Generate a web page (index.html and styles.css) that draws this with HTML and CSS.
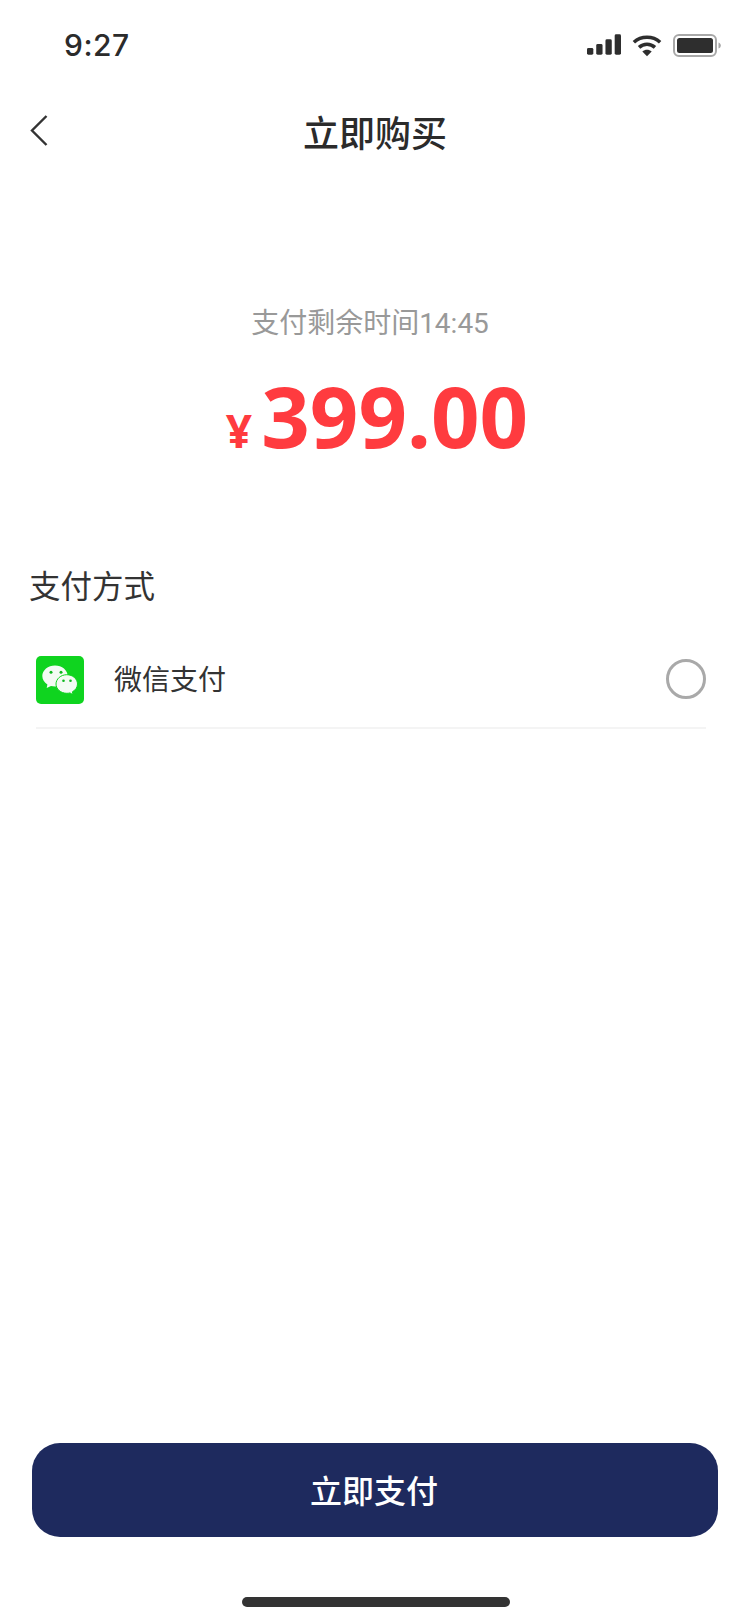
FILE: index.html
```html
<!DOCTYPE html>
<html lang="zh-CN">
<head>
<meta charset="utf-8">
<title>立即购买</title>
<link rel="stylesheet" href="styles.css">
</head>
<body>
<div class="page">
  <header class="status">
    <span class="time">9:27</span>
    <div class="status-icons">
      <svg class="ic-signal" width="34" height="22" viewBox="0 0 35 22"><g fill="#2e2e2e"><rect x="0" y="14" width="6.500" height="7" rx="1.500"/><rect x="9.500" y="10" width="6.500" height="11" rx="1.500"/><rect x="19" y="5" width="6.500" height="16" rx="1.500"/><rect x="28.500" y="0" width="6.500" height="21" rx="1.500"/></g></svg>
      <svg class="ic-wifi" width="30" height="23" viewBox="0 0 32 24"><g fill="none" stroke="#2e2e2e" stroke-width="3.800"><path d="M2 8.500C9.800 1.500 22.200 1.500 30 8.500"/><path d="M7.500 14C12.400 9.600 19.600 9.600 24.500 14"/></g><path d="M11 18.500C14 16 18 16 21 18.500L16 23.500Z" fill="#2e2e2e"/></svg>
      <svg class="ic-batt" width="48" height="23" viewBox="0 0 48 23"><rect x="1" y="1" width="42" height="21" rx="5" fill="none" stroke="#a8a8a8" stroke-width="2"/><rect x="4" y="4" width="36" height="15" rx="2.500" fill="#2e2e2e"/><path d="M45.500 8.500C47 9 47.800 10 47.800 11.500S47 14 45.500 14.500Z" fill="#a8a8a8"/></svg>
    </div>
  </header>

  <nav class="nav">
    <svg class="back" width="18" height="31" viewBox="0 0 18 31"><path d="M16.500 1L2 15.500 16.500 30" fill="none" stroke="#333" stroke-width="2.400"/></svg>
    <h1 class="title">立即购买</h1>
    <span class="nav-spacer"></span>
  </nav>

  <section class="summary">
    <p class="remain">支付剩余时间14:45</p>
    <p class="price"><span class="yen">¥</span><span class="amount">399.00</span></p>
  </section>

  <section class="methods">
    <h2 class="methods-title">支付方式</h2>
    <div class="method">
      <svg class="wechat" width="48" height="48" viewBox="0 0 48 48">
        <rect width="48" height="48" rx="5" fill="#0fd41f"/>
        <path d="M19 9.500C12 9.500 6.300 14.200 6.300 20c0 3.500 2 6.500 5.100 8.400L10.700 32l4.300-2.100c1.300.3 2.600.5 4 .5 7 0 12.700-4.600 12.700-10.400S26 9.500 19 9.500z" fill="#f4fbf4"/>
        <path d="M41.500 28c0-5-4.700-9.300-10.700-9.300S20 23 20 28s4.800 9.300 10.800 9.300c1.100 0 2.200-.1 3.200-.4l3 1.900-.6-3C39.500 34.100 41.500 31.300 41.500 28z" fill="#f4fbf4" stroke="#0fd41f" stroke-width="1"/>
        <circle cx="15" cy="16.300" r="1.500" fill="#0fb81f"/><circle cx="25" cy="16.300" r="1.500" fill="#0fb81f"/>
        <circle cx="27.500" cy="24.700" r="1.300" fill="#0fb81f"/><circle cx="34.500" cy="24.700" r="1.300" fill="#0fb81f"/>
      </svg>
      <span class="method-name">微信支付</span>
      <span class="radio"></span>
    </div>
  </section>

  <button class="pay" type="button">立即支付</button>
  <div class="home-wrap"><div class="home-bar"></div></div>
</div>
</body>
</html>
```

FILE: styles.css
```css
* { box-sizing: border-box; }
html, body { margin: 0; padding: 0; background: #fff; }
body { font-family: Roboto, "Noto Sans CJK SC", sans-serif; color: #333; }
.page { width: 750px; height: 1624px; display: flex; flex-direction: column; overflow: hidden; }
.status { height: 90px; display: flex; align-items: center; justify-content: space-between; padding: 0 29px 0 64px; }
.time { font-family: Inter, Roboto, sans-serif; font-size: 30px; font-weight: 500; color: #2b2b2b; letter-spacing: 0.5px; }
.status-icons { display: flex; align-items: center; gap: 11px; }
.nav { height: 90px; display: grid; grid-template-columns: 90px 1fr 90px; align-items: center; }
.back { margin: -10px 0 0 30px; }
.title { margin: 0; text-align: center; font-size: 36px; font-weight: 500; color: #2b2b2b; line-height: 1; }
.summary { padding-top: 124px; display: flex; flex-direction: column; align-items: center; }
.remain { margin: 0 10px 0 0; font-size: 28px; line-height: 40px; color: #999; }
.price { margin: 21px 0 0 4px; display: flex; align-items: baseline; gap: 9px; color: #ff3b3f; font-family: "Noto Sans", "Open Sans", sans-serif; font-weight: 700; line-height: 100px; }
.yen { font-size: 46px; }
.amount { font-size: 85px; }
.methods { padding: 86px 44px 0 36px; }
.methods-title { margin: 0 0 0 -7px; font-size: 31.5px; font-weight: 400; line-height: 44px; color: #333; }
.method { margin-top: 42px; height: 77px; display: flex; align-items: flex-start; border-bottom: 2px solid #f4f4f4; padding-top: 4px; }
.method-name { margin: 1px 0 0 30px; font-size: 28px; line-height: 48px; color: #333; }
.radio { margin-left: auto; width: 40px; height: 40px; border: 3px solid #a9a9a9; border-radius: 50%; margin-top: 3px; }
.pay { margin: auto 32px 0; height: 94px; padding: 0 2px 2px 0; border: 0; border-radius: 28px; background: #1e2a5e; color: #fff; font-family: "Noto Sans CJK SC", sans-serif; font-size: 32px; font-weight: 500; }
.home-wrap { height: 87px; padding: 60px 0 0 2px; display: flex; justify-content: center; }
.home-bar { width: 268px; height: 10px; border-radius: 5px; background: #333; }
```
